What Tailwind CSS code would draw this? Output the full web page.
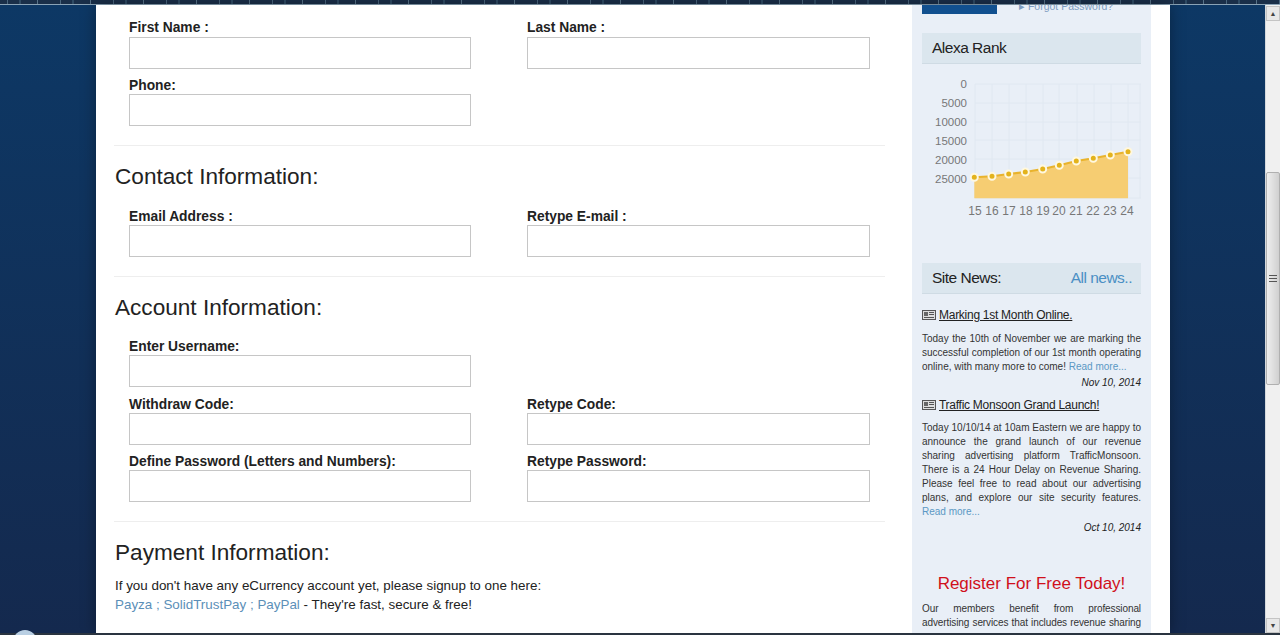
<!DOCTYPE html>
<html lang="en">
<head>
    <meta charset="UTF-8">
    <title>Register</title>
    <script src="https://cdn.jsdelivr.net/npm/@tailwindcss/browser@4"></script>
</head>
<body class="h-[635px] overflow-hidden font-['Liberation_Sans',Arial,sans-serif] text-[#222]">
    <div class="flex h-[635px] flex-col overflow-hidden">
        <!-- starry strip at the top of the page -->
        <div class="h-[5px] shrink-0 border-b border-[#8aa3b6] bg-[#1a2f49] bg-[repeating-linear-gradient(90deg,transparent_0_7px,#4a667e_7px_8px,transparent_8px_19px,#2f4b64_19px_21px,transparent_21px_37px,#587389_37px_38px,transparent_38px_53px)]"></div>

        <div class="flex min-h-0 flex-1">
            <div class="flex min-w-0 flex-1 justify-center bg-[linear-gradient(180deg,#0d3865,#14294e)] pl-[96px] pr-[95px]">
                <div class="flex w-full bg-white shadow-[0_0_14px_rgba(0,0,0,0.35)]">
                    <!-- form column -->
                    <main class="w-[816px] shrink-0 pl-[18px] pr-[27px]">
                        <div class="pl-[15px]">
                            <div class="grid grid-cols-[342px_343px] gap-x-[56px] pt-[12px]">
                                <div class="mb-[5px]"><label class="block h-[20px] text-[13.8px] leading-[21px] font-bold">First Name :</label><input class="block h-[32px] w-full border border-[#c6c6c6] bg-white"></div>
                                <div class="mb-[5px]"><label class="block h-[20px] text-[13.8px] leading-[21px] font-bold">Last Name :</label><input class="block h-[32px] w-full border border-[#c6c6c6] bg-white"></div>
                                <div><label class="block h-[20px] text-[13.8px] leading-[23px] font-bold">Phone:</label><input class="block h-[32px] w-full border border-[#c6c6c6] bg-white"></div>
                            </div>
                        </div>
                        <hr class="mt-[19px] border-[#eeeeee]">
                        <h2 class="mt-[16px] h-[30px] pl-[1px] text-[22.6px] leading-[30px] text-[#222]">Contact Information:</h2>
                        <div class="pl-[15px]">
                            <div class="grid grid-cols-[342px_343px] gap-x-[56px] pt-[13px]">
                                <div><label class="block h-[20px] text-[13.8px] leading-[23px] font-bold">Email Address :</label><input class="block h-[32px] w-full border border-[#c6c6c6] bg-white"></div>
                                <div><label class="block h-[20px] text-[13.8px] leading-[23px] font-bold">Retype E-mail :</label><input class="block h-[32px] w-full border border-[#c6c6c6] bg-white"></div>
                            </div>
                        </div>
                        <hr class="mt-[19px] border-[#eeeeee]">
                        <h2 class="mt-[16px] h-[30px] pl-[1px] text-[22.6px] leading-[30px] text-[#222]">Account Information:</h2>
                        <div class="pl-[15px]">
                            <div class="grid grid-cols-[342px_343px] gap-x-[56px] pt-[12px]">
                                <div class="col-span-2 mb-[6px]"><label class="block h-[20px] text-[13.8px] leading-[23px] font-bold">Enter Username:</label><input class="block h-[32px] w-[342px] border border-[#c6c6c6] bg-white"></div>
                                <div class="mb-[5px]"><label class="block h-[20px] text-[13.8px] leading-[23px] font-bold">Withdraw Code:</label><input class="block h-[32px] w-full border border-[#c6c6c6] bg-white"></div>
                                <div class="mb-[5px]"><label class="block h-[20px] text-[13.8px] leading-[23px] font-bold">Retype Code:</label><input class="block h-[32px] w-full border border-[#c6c6c6] bg-white"></div>
                                <div><label class="block h-[20px] text-[13.8px] leading-[23px] font-bold">Define Password (Letters and Numbers):</label><input class="block h-[32px] w-full border border-[#c6c6c6] bg-white"></div>
                                <div><label class="block h-[20px] text-[13.8px] leading-[23px] font-bold">Retype Password:</label><input class="block h-[32px] w-full border border-[#c6c6c6] bg-white"></div>
                            </div>
                        </div>
                        <hr class="mt-[19px] border-[#eeeeee]">
                        <h2 class="mt-[16px] h-[30px] pl-[1px] text-[22.6px] leading-[30px] text-[#222]">Payment Information:</h2>
                        <p class="mt-[8px] pl-[1px] text-[13.4px] leading-[19px]">If you don't have any eCurrency account yet, please signup to one here:<br>
                            <a class="text-[#5b8fb8]">Payza</a><span class="text-[#5b8fb8]"> ; </span><a class="text-[#5b8fb8]">SolidTrustPay</a><span class="text-[#5b8fb8]"> ; </span><a class="text-[#5b8fb8]">PayPal</a> - They're fast, secure &amp; free!</p>
                    </main>

                    <!-- sidebar -->
                    <aside class="w-[239px] shrink-0 overflow-hidden bg-[#e9eff7] px-[10px]">
                        <div class="flex h-[9px] items-end gap-[22px]">
                            <div class="h-[9px] w-[75px] shrink-0 bg-[#11508f]"></div>
                            <a class="h-[9px] shrink-0 text-[10.5px] leading-[3px] whitespace-nowrap text-[#7d9cc0]">▸ Forgot Password?</a>
                        </div>

                        <h3 class="mt-[19px] h-[31px] border-b border-[#cfdbe4] bg-[#dbe6ee] pl-[10px] text-[15.5px] leading-[29px] tracking-[-0.5px] text-[#222]">Alexa Rank</h3>
                        <svg class="mt-[8px] block h-[150px] w-[219px] font-['Liberation_Sans',Arial,sans-serif]" viewBox="0 0 219 150">
                            <g stroke="#e0e8f1" stroke-width="1">
                                <path d="M53 12v114M70 12v114M87 12v114M104 12v114M121 12v114M137 12v114M155 12v114M172 12v114M189 12v114M206 12v114M218 12v114"/>
                                <path d="M53 12h166M53 31h166M53 50h166M53 68h166M53 87h166M53 106h166M53 126h166"/>
                            </g>
                            <path d="M52.300 105.300 L70 104.300 L86.700 102 L103.300 100 L120.700 97 L137.300 93.300 L154.300 89 L171.300 86.300 L188.300 83 L206 79.700 L206 126.300 L52.300 126.300Z" fill="#f6cd72"/>
                            <path d="M52.300 105.300 L70 104.300 L86.700 102 L103.300 100 L120.700 97 L137.300 93.300 L154.300 89 L171.300 86.300 L188.300 83 L206 79.700" fill="none" stroke="#e9b32c" stroke-width="2"/>
                            <g fill="#e3b31c" stroke="#fff8e0" stroke-width="2">
                                <circle cx="52.300" cy="105.300" r="3.500"/><circle cx="70" cy="104.300" r="3.500"/><circle cx="86.700" cy="102" r="3.500"/><circle cx="103.300" cy="100" r="3.500"/><circle cx="120.700" cy="97" r="3.500"/><circle cx="137.300" cy="93.300" r="3.500"/><circle cx="154.300" cy="89" r="3.500"/><circle cx="171.300" cy="86.300" r="3.500"/><circle cx="188.300" cy="83" r="3.500"/><circle cx="206" cy="79.700" r="3.500"/>
                            </g>
                            <g fill="#777" font-size="11.500" text-anchor="end">
                                <text x="45" y="16">0</text><text x="45" y="35">5000</text><text x="45" y="54">10000</text><text x="45" y="73">15000</text><text x="45" y="92">20000</text><text x="45" y="111">25000</text>
                            </g>
                            <g fill="#777" font-size="12" text-anchor="middle">
                                <text x="53" y="143">15</text><text x="70" y="143">16</text><text x="87" y="143">17</text><text x="104" y="143">18</text><text x="121" y="143">19</text><text x="137" y="143">20</text><text x="154" y="143">21</text><text x="171" y="143">22</text><text x="188" y="143">23</text><text x="205" y="143">24</text>
                            </g>
                        </svg>

                        <h3 class="mt-[41px] flex h-[31px] justify-between border-b border-[#cfdbe4] bg-[#dbe6ee] pr-[9px] pl-[10px] text-[15.5px] leading-[29px] tracking-[-0.5px] text-[#222]"><span>Site News:</span><a class="text-[#4a8fc4]">All news..</a></h3>

                        <div class="mt-[12px] flex h-[18px] items-center gap-[3px]">
                            <svg class="h-[10px] w-[14px] shrink-0" viewBox="0 0 14 10"><rect x=".5" y=".5" width="13" height="9" fill="#ddd" stroke="#555"/><rect x="2" y="2" width="4" height="4" fill="#666"/><path d="M7 2.500h5M7 4.500h5M2 7.500h10" stroke="#555"/></svg>
                            <a class="text-[12px] leading-[18px] tracking-[-0.27px] text-[#222] underline">Marking 1st Month Online.</a>
                        </div>
                        <p class="mt-[8px] text-justify text-[10px] leading-[14px] text-[#333]">Today the 10th of November we are marking the successful completion of our 1st month operating online, with many more to come! <a class="text-[#5b98c4]">Read more...</a></p>
                        <p class="text-right text-[10px] leading-[17px] text-[#222] italic">Nov 10, 2014</p>

                        <div class="mt-[5px] flex h-[18px] items-center gap-[3px]">
                            <svg class="h-[10px] w-[14px] shrink-0" viewBox="0 0 14 10"><rect x=".5" y=".5" width="13" height="9" fill="#ddd" stroke="#555"/><rect x="2" y="2" width="4" height="4" fill="#666"/><path d="M7 2.500h5M7 4.500h5M2 7.500h10" stroke="#555"/></svg>
                            <a class="text-[12px] leading-[18px] tracking-[-0.27px] text-[#222] underline">Traffic Monsoon Grand Launch!</a>
                        </div>
                        <p class="mt-[7px] text-justify text-[10px] leading-[14px] text-[#333]">Today 10/10/14 at 10am Eastern we are happy to announce the grand launch of our revenue sharing advertising platform TrafficMonsoon. There is a 24 Hour Delay on Revenue Sharing. Please feel free to read about our advertising plans, and explore our site security features. <a class="text-[#5b98c4]">Read more...</a></p>
                        <p class="text-right text-[10px] leading-[17px] text-[#222] italic">Oct 10, 2014</p>

                        <h3 class="mt-[36px] text-center text-[17px] leading-[24px] text-[#d0101c]">Register For Free Today!</h3>
                        <p class="mt-[6px] h-[28px] overflow-hidden text-justify text-[10px] leading-[14px] tracking-[-0.1px] text-[#333]">Our members benefit from professional advertising services that includes revenue sharing and more.</p>
                    </aside>
                    <div class="flex-1"></div>
                </div>
            </div>

            <!-- scrollbar -->
            <div class="flex w-[15px] shrink-0 flex-col border-l border-[#d5d9dd] bg-[#f0f0f0] pt-[1px]">
                <div class="flex h-[15px] items-center justify-center border border-[#c4c4c4] bg-[#e8e8e8] text-[7px] leading-none text-[#444]">▲</div>
                <div class="h-[151px]"></div>
                <div class="flex h-[213px] items-center justify-center rounded-[2px] border border-[#b0b0b0] bg-[linear-gradient(90deg,#eeeeee,#d0d0d0)]">
                    <svg class="h-[9px] w-[8px]" viewBox="0 0 8 9"><path d="M0 1.500h8M0 4.500h8M0 7.500h8" stroke="#555"/></svg>
                </div>
                <div class="flex-1"></div>
                <div class="flex h-[15px] items-center justify-center border border-[#c4c4c4] bg-[#e8e8e8] text-[7px] leading-none text-[#444]">▼</div>
            </div>
        </div>
        <div class="h-[2px] shrink-0 bg-[#2a3440]"></div>
    </div>
    <!-- start orb peeking over the bottom edge -->
    <div class="absolute top-[630px] left-[13px] h-[24px] w-[24px] rounded-full bg-[#b9cfe3]"></div>
</body>
</html>
